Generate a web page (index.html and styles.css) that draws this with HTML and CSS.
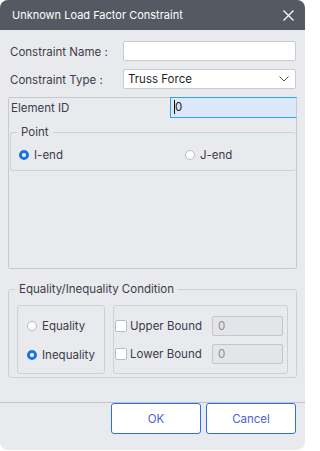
FILE: index.html
```html
<!DOCTYPE html>
<html>
<head>
<meta charset="utf-8">
<link rel="stylesheet" href="styles.css">
</head>
<body>
<div class="dialog">
  <div class="titlebar">
    <span class="title">Unknown Load Factor Constraint</span>
    <svg class="close" width="11" height="11" viewBox="0 0 11 11"><path d="M0.5 0.5L10.5 10.5M10.5 0.5L0.5 10.5" stroke="#fff" stroke-width="1.2" fill="none"/></svg>
  </div>
  <div class="content">
    <div class="row">
      <span class="label">Constraint Name :</span>
      <div class="input"></div>
    </div>
    <div class="row">
      <span class="label">Constraint Type :</span>
      <div class="input select"><span>Truss Force</span>
        <svg width="10" height="6" viewBox="0 0 10 6"><path d="M0.5 0.5L5 5L9.5 0.5" stroke="#555" stroke-width="1" fill="none"/></svg>
      </div>
    </div>
    <div class="panel">
      <div class="elemrow">
        <span class="label">Element ID</span>
        <div class="elem-input"><span class="sel">0</span></div>
      </div>
      <fieldset class="point">
        <legend>Point</legend>
        <div class="pointrow">
          <label class="opt"><span class="radio on"></span>I-end</label>
          <label class="opt jend"><span class="radio"></span>J-end</label>
        </div>
      </fieldset>
    </div>
    <fieldset class="cond">
      <legend>Equality/Inequality Condition</legend>
      <div class="condrow">
        <div class="box left">
          <label class="opt"><span class="radio"></span>Equality</label>
          <label class="opt"><span class="radio on"></span>Inequality</label>
        </div>
        <div class="box right">
          <div class="bound"><span class="check"></span><span class="blabel">Upper Bound</span><div class="num">0</div></div>
          <div class="bound"><span class="check"></span><span class="blabel">Lower Bound</span><div class="num">0</div></div>
        </div>
      </div>
    </fieldset>
  </div>
  <div class="footer">
    <button class="btn">OK</button>
    <button class="btn">Cancel</button>
  </div>
</div>
</body>
</html>
```
FILE: styles.css
```css
html, body {
  margin: 0;
  padding: 0;
  background: #ffffff;
}
body {
  font-family: Inter, "Noto Sans", sans-serif;
  font-size: 11.5px;
  color: #3d3c4a;
}
.dialog {
  width: 305px;
  height: 450px;
  background: #e9eaed;
  border-radius: 8px;
  overflow: hidden;
  display: flex;
  flex-direction: column;
}
.titlebar {
  height: 30px;
  background: #545a62;
  display: flex;
  align-items: center;
  justify-content: space-between;
  padding: 0 11px 0 12px;
  flex-shrink: 0;
}
.title {
  color: #ffffff;
  font-size: 11px;
}
.close {
  display: block;
}
.content {
  padding: 11px 8px 0 8px;
  width: 289px;
}
.row {
  display: flex;
  align-items: center;
  height: 20px;
  margin-bottom: 8px;
}
.row .label {
  width: 113px;
  padding-left: 2px;
  padding-top: 1px;
}
.input {
  width: 171px;
  height: 18px;
  background: #ffffff;
  border: 1px solid #c9cbcf;
  border-radius: 2px;
}
.select {
  display: flex;
  align-items: center;
  justify-content: space-between;
  padding: 0 6px 0 4px;
  width: 161px;
  color: #1f1f1f;
}
.panel {
  border: 1px solid #c6c9cd;
  border-radius: 2px;
  box-sizing: border-box;
  height: 172px;
}
.elemrow {
  display: flex;
  align-items: center;
  height: 20px;
  margin-top: -1px;
}
.elemrow .label {
  width: 159px;
  padding-left: 2px;
  padding-top: 1px;
}
.elem-input {
  flex: 1;
  height: 21px;
  box-sizing: border-box;
  background: #dce7f9;
  border: 1px solid #27a9e1;
  border-right: 1px solid #c6c9cd;
  margin-right: -1px;
  padding-left: 3px;
  display: flex;
  align-items: center;
  color: #111;
}
.sel {
  border-left: 1px solid #111;
  color: #222;
}
fieldset {
  margin: 0;
  border: 1px solid #cdd0d4;
  border-radius: 3px;
  padding: 0;
}
legend {
  padding: 0 4px;
  margin-left: 6px;
}
.point {
  margin: 8px 0 0 1px;
  height: 46px;
  box-sizing: border-box;
  border-right: none;
}
.pointrow {
  display: flex;
  align-items: center;
  padding: 9px 0 0 8px;
}
.opt {
  display: flex;
  align-items: center;
  gap: 5px;
  height: 14px;
}
.jend {
  margin-left: 122px;
}
.radio {
  width: 8px;
  height: 8px;
  border-radius: 50%;
  border: 1px solid #b9bcc0;
  background: #ffffff;
  display: inline-block;
}
.radio.on {
  width: 4px;
  height: 4px;
  border: 3px solid #1a73e8;
  background: #ffffff;
}
.cond {
  margin-top: 13px;
  height: 96px;
  box-sizing: border-box;
}
.condrow {
  display: flex;
  gap: 8px;
  padding: 9px 0 0 8px;
}
.box {
  border: 1px solid #cdd0d4;
  border-radius: 3px;
  height: 69px;
  box-sizing: border-box;
}
.left {
  width: 88px;
  display: flex;
  flex-direction: column;
  gap: 15px;
  padding: 13px 0 0 9px;
}
.right {
  width: 175px;
  display: flex;
  flex-direction: column;
  gap: 8px;
  padding: 10px 0 0 1px;
}
.bound {
  display: flex;
  align-items: center;
  height: 20px;
}
.check {
  width: 10px;
  height: 10px;
  border: 1px solid #b9bcc0;
  border-radius: 2px;
  background: #ffffff;
}
.blabel {
  margin-left: 3px;
  width: 82px;
}
.num {
  width: 64px;
  height: 18px;
  background: #e3e5e8;
  border: 1px solid #c3c6ca;
  border-radius: 2px;
  color: #8a8c90;
  display: flex;
  align-items: center;
  padding-left: 5px;
}
.footer {
  margin-top: auto;
  border-top: 1px solid #c0c3c7;
  height: 47px;
  display: flex;
  justify-content: flex-end;
  align-items: flex-start;
  gap: 5px;
  padding-right: 9px;
}
.btn {
  width: 90px;
  height: 31px;
  background: #ffffff;
  border: 1px solid #2d6fe0;
  border-radius: 3px;
  font-family: Inter, "Noto Sans", sans-serif;
  font-size: 11.5px;
  color: #4b62d6;
}
```
